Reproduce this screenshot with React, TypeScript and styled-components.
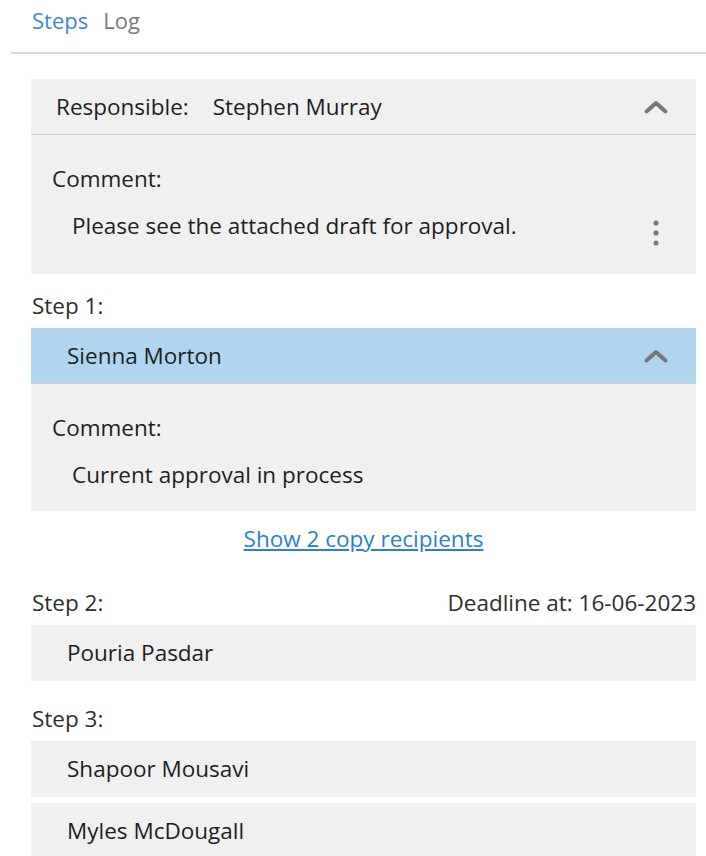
import * as React from "react";
import styled, { createGlobalStyle } from "styled-components";

const GlobalStyle = createGlobalStyle`
  body {
    margin: 0;
    background: #ffffff;
    font-family: "Open Sans", "Noto Sans", "Liberation Sans", sans-serif;
    color: #1e1e1e;
  }
`;

const Page = styled.div`
  width: 706px;
  height: 856px;
  overflow: hidden;
`;

const Tabs = styled.div`
  display: flex;
  gap: 15px;
  margin-left: 11px;
  padding: 5px 0 0 21px;
  height: 54px;
  box-sizing: border-box;
  border-bottom: 2px solid #d9d9d9;
`;

const Tab = styled.span<{ active?: boolean }>`
  font-size: 22px;
  line-height: 30px;
  color: ${p => (p.active ? "#3d86da" : "#7a7a7a")};
`;

const Content = styled.div`
  padding: 25px 10px 0 31px;
  display: flex;
  flex-direction: column;
  font-size: 22.5px;
  line-height: 30px;
`;

const Card = styled.div`
  background: #f0f0f0;
`;

const CardHeader = styled.div<{ selected?: boolean }>`
  display: flex;
  align-items: center;
  height: 56px;
  box-sizing: border-box;
  padding: 0 27px 0 ${p => (p.selected ? 36 : 25)}px;
  background: ${p => (p.selected ? "#b2d5ef" : "#f0f0f0")};
  border-bottom: 1px solid #cfcfcf;
`;

const HeaderLabel = styled.span`
  margin-right: 24px;
`;

const Name = styled.span`
  flex: 1;
`;

const CardBody = styled.div<{ tall?: boolean }>`
  position: relative;
  padding: 29px 20px ${p => (p.tall ? 33 : 21)}px 21px;
`;

const CommentText = styled.div`
  margin-top: 17px;
  padding-left: 20px;
`;

const MenuDots = styled.div`
  position: absolute;
  right: 36px;
  top: 84px;
  display: flex;
`;

const StepHead = styled.div<{ gap?: number }>`
  display: flex;
  justify-content: space-between;
  color: #2e2e2e;
  margin: ${p => p.gap ?? 23}px 0 7px 1px;
`;

const Person = styled.div`
  background: #f0f0f0;
  height: 56px;
  display: flex;
  align-items: center;
  padding-left: 36px;
  & + & {
    margin-top: 6px;
  }
`;

const LinkRow = styled.div`
  display: flex;
  justify-content: center;
  margin: 13px 0 11px;
`;

const Link = styled.a`
  color: #2b7fd0;
  text-decoration: underline;
  text-underline-offset: 2px;
  cursor: pointer;
`;

const Chevron = () => (
  <svg width="26" height="16" viewBox="0 0 26 16">
    <path
      d="M3.5 12.5 L13 4 L22.5 12.5"
      fill="none"
      stroke="#777"
      strokeWidth="4"
      strokeLinecap="round"
      strokeLinejoin="round"
    />
  </svg>
);

const Dots = () => (
  <svg width="8" height="28" viewBox="0 0 8 28">
    <circle cx="4" cy="4" r="2.5" fill="#777" />
    <circle cx="4" cy="14" r="2.5" fill="#777" />
    <circle cx="4" cy="24" r="2.5" fill="#777" />
  </svg>
);

export default function App() {
  return (
    <Page>
      <GlobalStyle />
      <Tabs>
        <Tab active>Steps</Tab>
        <Tab>Log</Tab>
      </Tabs>
      <Content>
        <Card>
          <CardHeader>
            <HeaderLabel>Responsible:</HeaderLabel>
            <Name>Stephen Murray</Name>
            <Chevron />
          </CardHeader>
          <CardBody tall>
            <div>Comment:</div>
            <CommentText>Please see the attached draft for approval.</CommentText>
            <MenuDots>
              <Dots />
            </MenuDots>
          </CardBody>
        </Card>

        <StepHead gap={17}>
          <span>Step 1:</span>
        </StepHead>
        <Card>
          <CardHeader selected>
            <Name>Sienna Morton</Name>
            <Chevron />
          </CardHeader>
          <CardBody>
            <div>Comment:</div>
            <CommentText>Current approval in process</CommentText>
          </CardBody>
        </Card>
        <LinkRow>
          <Link>Show 2 copy recipients</Link>
        </LinkRow>

        <StepHead>
          <span>Step 2:</span>
          <span>Deadline at: 16-06-2023</span>
        </StepHead>
        <Person>Pouria Pasdar</Person>

        <StepHead>
          <span>Step 3:</span>
        </StepHead>
        <Person>Shapoor Mousavi</Person>
        <Person>Myles McDougall</Person>
      </Content>
    </Page>
  );
}
